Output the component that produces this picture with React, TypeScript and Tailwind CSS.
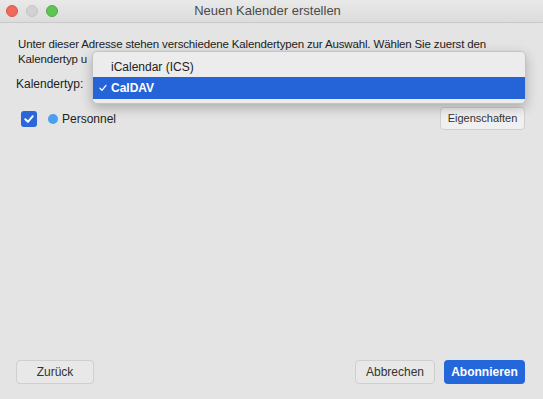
import React from "react";

const font = { fontFamily: '"Liberation Sans", Arial, sans-serif' };

export default function App() {
  return (
    <div
      className="relative flex h-[399px] w-[543px] flex-col overflow-hidden bg-[#e4e4e4] text-[#222]"
      style={font}
    >
      {/* Title bar */}
      <div className="relative flex h-[23px] items-center border-b border-[#c9c9c9] bg-gradient-to-b from-[#e9e9e9] to-[#dcdcdc]">
        <div className="flex items-center gap-[8px] pl-[6px]">
          <span className="h-[12px] w-[12px] rounded-full border border-[#e0544a] bg-[#ee6a5f]" />
          <span className="h-[12px] w-[12px] rounded-full border border-[#c4c4c4] bg-[#d2d2d2]" />
          <span className="h-[12px] w-[12px] rounded-full border border-[#4dae42] bg-[#5ec452]" />
        </div>
        <div className="flex-1 pr-[66px] text-center text-[13px] text-[#4a4a4a]">
          Neuen Kalender erstellen
        </div>
      </div>

      {/* Content */}
      <div className="flex flex-1 flex-col px-[16px]">
        <p className="mt-[14px] pl-[2px] text-[11.5px] leading-[15px] tracking-[-0.15px] text-[#222]">
          Unter dieser Adresse stehen verschiedene Kalendertypen zur Auswahl. Wählen Sie zuerst den
          <br />
          Kalendertyp u
        </p>

        <div className="mt-[6px] flex h-[22px] items-center">
          <span className="text-[12px]">Kalendertyp:</span>
        </div>

        <div className="mt-[12px] flex items-center">
          <span className="ml-[5px] flex h-[16px] w-[16px] items-center justify-center rounded-[3px] bg-[#2a66d8]">
            <svg width="12" height="12" viewBox="0 0 12 12">
              <path
                d="M2.3 6.2 L4.9 8.8 L9.8 3.2"
                fill="none"
                stroke="white"
                strokeWidth="2"
                strokeLinecap="round"
                strokeLinejoin="round"
              />
            </svg>
          </span>
          <span className="ml-[11px] h-[10px] w-[10px] rounded-full bg-[#4a9ff0]" />
          <span className="ml-[4px] text-[12px]">Personnel</span>
          <div className="flex-1" />
          <button className="mr-[2px] flex h-[23px] w-[85px] items-center justify-center rounded-[4px] border border-[#cfcfcf] bg-[#f0f0f0] text-[11px] text-[#333]">
            Eigenschaften
          </button>
        </div>

        <div className="flex-1" />

        <div className="mb-[15px] flex items-center">
          <button className="flex h-[24px] w-[78px] items-center justify-center rounded-[4px] border border-[#cfcfcf] bg-[#e8e8e8] text-[12px] text-[#333]">
            Zurück
          </button>
          <div className="flex-1" />
          <button className="flex h-[24px] w-[80px] items-center justify-center rounded-[4px] border border-[#cfcfcf] bg-[#e8e8e8] text-[12px] text-[#333]">
            Abbrechen
          </button>
          <button className="ml-[9px] mr-[2px] flex h-[24px] w-[81px] items-center justify-center rounded-[4px] bg-[#2467db] text-[12px] font-bold text-white">
            Abonnieren
          </button>
        </div>
      </div>

      {/* Dropdown menu overlay */}
      <div className="absolute left-[92px] top-[51px] w-[434px] rounded-[5px] border border-[#c4c4c4] bg-[#ececec] py-[4px] shadow-[0_4px_12px_rgba(0,0,0,0.25)]">
        <div className="flex h-[21px] items-center pl-[18px] text-[12px] text-[#222]">
          iCalendar (ICS)
        </div>
        <div className="flex h-[22px] items-center bg-[#2563d9] text-[12px] font-bold text-white">
          <span className="flex w-[14px] justify-end">
            <svg width="8" height="8" viewBox="0 0 8 8">
              <path
                d="M1 4.3 L3 6.4 L7 1.4"
                fill="none"
                stroke="white"
                strokeWidth="1.3"
                strokeLinecap="round"
                strokeLinejoin="round"
              />
            </svg>
          </span>
          <span className="ml-[4px]">CalDAV</span>
        </div>
      </div>
    </div>
  );
}
